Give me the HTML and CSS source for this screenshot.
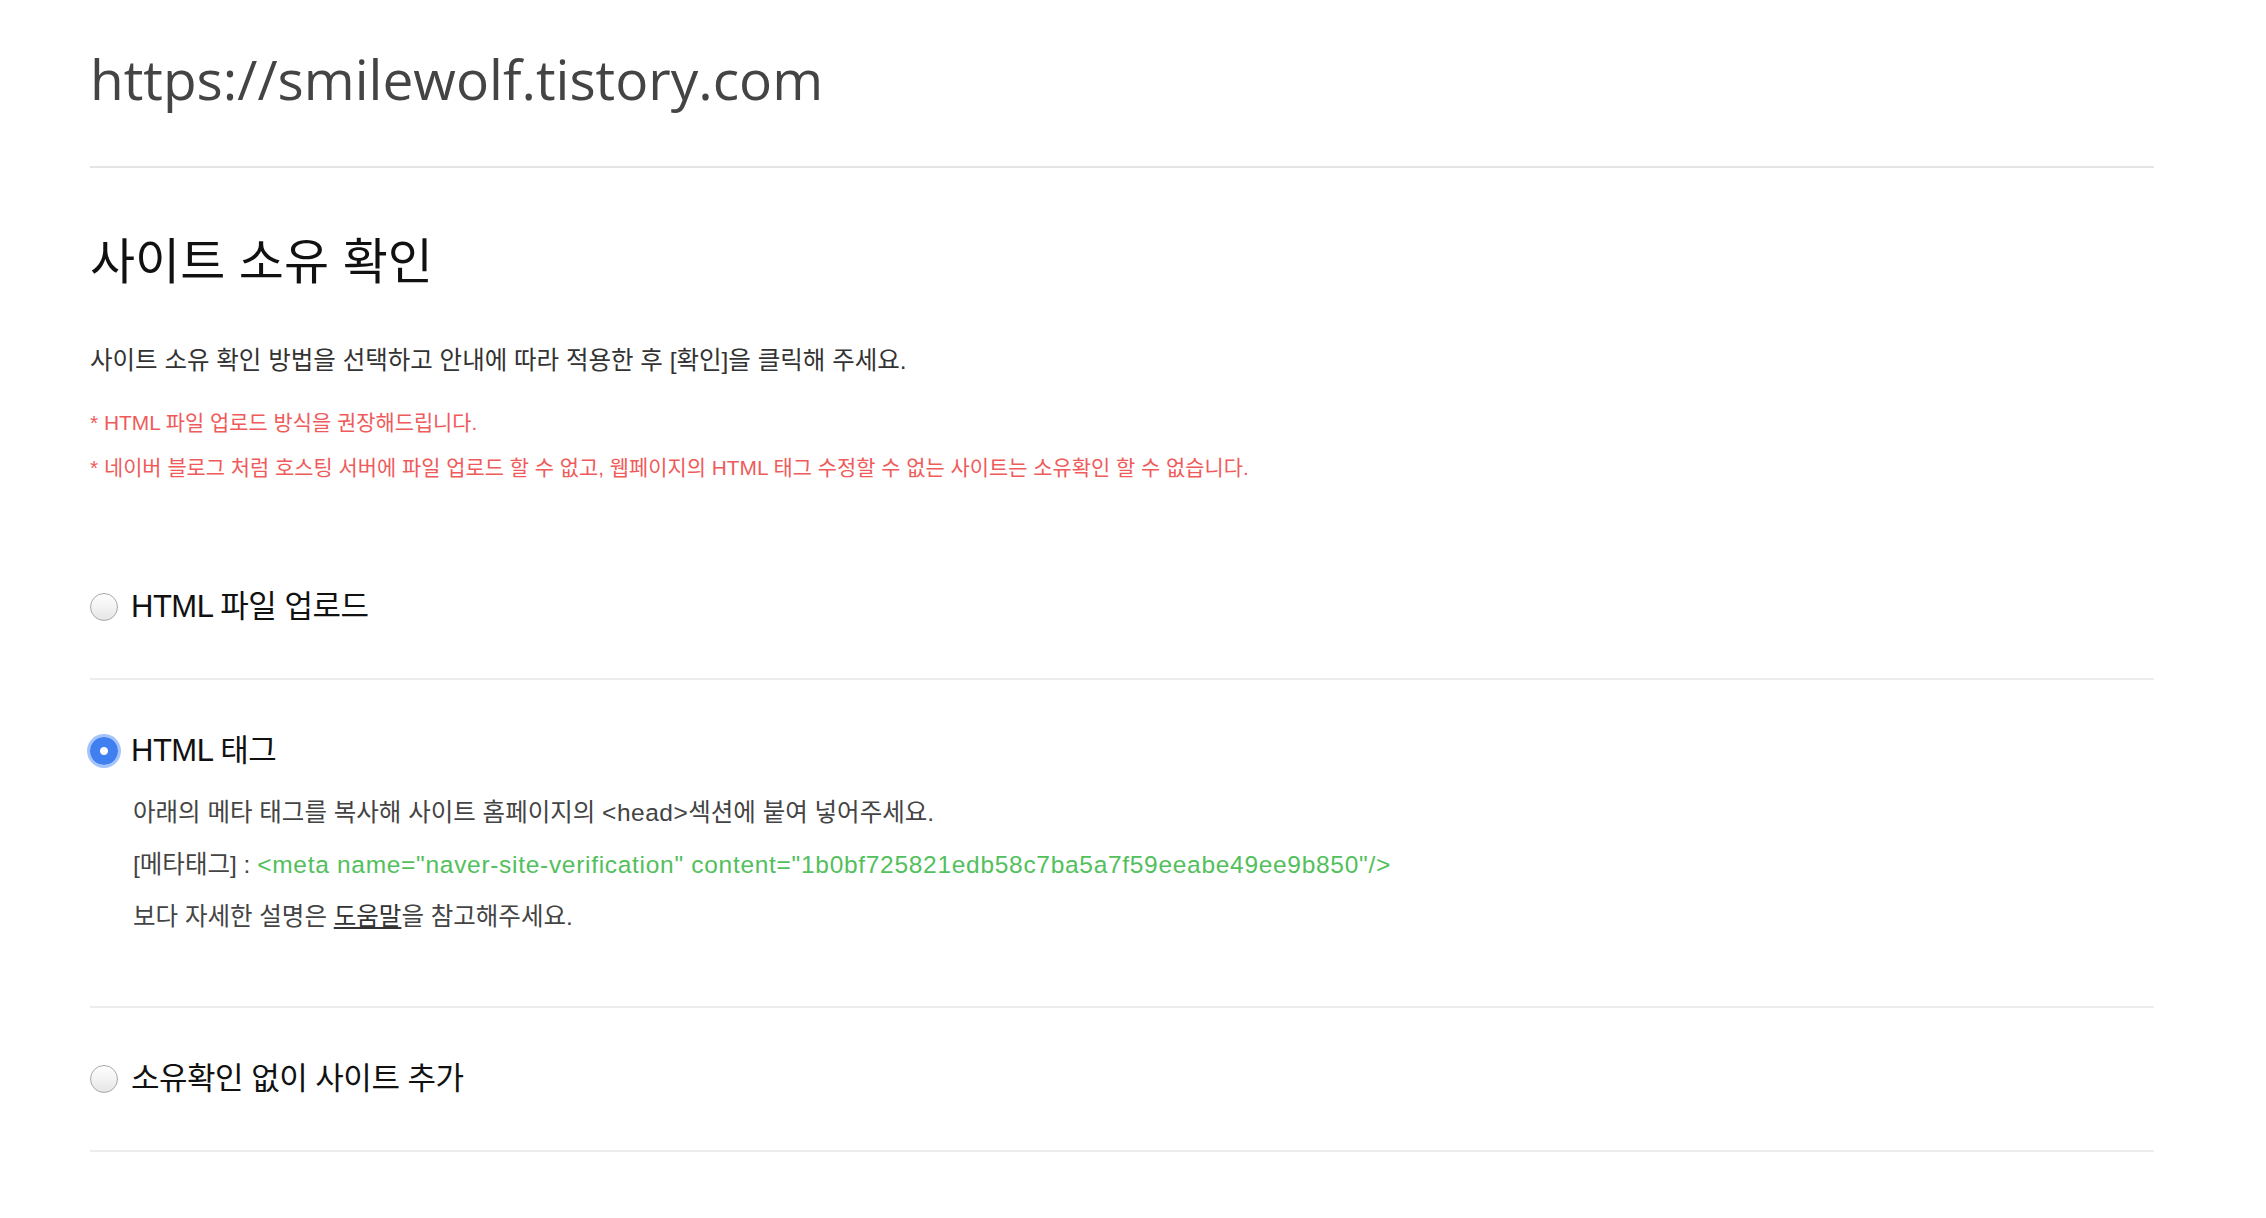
FILE: index.html
```html
<!DOCTYPE html>
<html lang="ko">
<head>
  <meta charset="UTF-8" />
  <meta name="viewport" content="width=device-width, initial-scale=1" />
  <title>사이트 소유 확인</title>
  <link rel="stylesheet" href="styles.css">
</head>
<body>
  <div class="page">
    <h1 class="site-url">https://smilewolf.tistory.com</h1>

    <h2 class="section-title">사이트 소유 확인</h2>
    <p class="desc">사이트 소유 확인 방법을 선택하고 안내에 따라 적용한 후 [확인]을 클릭해 주세요.</p>
    <p class="note">* HTML 파일 업로드 방식을 권장해드립니다.</p>
    <p class="note">* 네이버 블로그 처럼 호스팅 서버에 파일 업로드 할 수 없고, 웹페이지의 HTML 태그 수정할 수 없는 사이트는 소유확인 할 수 없습니다.</p>

    <div class="options">
      <div class="option">
        <label class="option-label">
          <input type="radio" name="verify" value="file" />
          <span>HTML 파일 업로드</span>
        </label>
      </div>

      <div class="option option-open">
        <label class="option-label">
          <input type="radio" name="verify" value="tag" checked />
          <span>HTML 태그</span>
        </label>
        <div class="option-body">
          <p>아래의 메타 태그를 복사해 사이트 홈페이지의 <span class="latin">&lt;head&gt;</span>섹션에 붙여 넣어주세요.</p>
          <p>[메타태그] : <span class="meta-code">&lt;meta name="naver-site-verification" content="1b0bf725821edb58c7ba5a7f59eeabe49ee9b850"/&gt;</span></p>
          <p>보다 자세한 설명은 <a href="#" class="help-link">도움말</a>을 참고해주세요.</p>
        </div>
      </div>

      <div class="option">
        <label class="option-label">
          <input type="radio" name="verify" value="none" />
          <span>소유확인 없이 사이트 추가</span>
        </label>
      </div>
    </div>
  </div>
</body>
</html>
```

FILE: styles.css
```css
body {
  margin: 0;
  padding: 0;
  background-color: #fff;
  color: #111;
  font-family: 'Liberation Sans', 'Noto Sans CJK KR', sans-serif;
}

.page {
  width: 2064px;
  margin-left: 90px;
}

.site-url {
  margin: 0;
  padding: 49px 0 57px;
  font-family: 'Open Sans', sans-serif;
  font-size: 55px;
  font-weight: normal;
  line-height: 60px;
  color: #444;
  border-bottom: 2px solid #e4e4e4;
}

.section-title {
  margin: 66px 0 0;
  font-size: 49px;
  font-weight: normal;
  line-height: 56px;
  color: #111;
}

.desc {
  margin: 54px 0 0;
  font-size: 24.5px;
  line-height: 34px;
  color: #333;
}

.note {
  margin: 30px 0 0;
  font-size: 20.9px;
  line-height: 30px;
  color: #ef5b5b;
}

.note + .note {
  margin-top: 15px;
}

.options {
  margin-top: 53px;
}

.option {
  padding: 51px 0;
  border-bottom: 2px solid #ececec;
}

.option-open {
  padding-bottom: 63px;
}

.option-label {
  display: flex;
  align-items: center;
  gap: 13px;
  font-size: 31px;
  line-height: 40px;
  letter-spacing: -0.5px;
  color: #111;
  cursor: pointer;
}

.option-label input {
  appearance: none;
  -webkit-appearance: none;
  margin: 0;
  width: 28px;
  height: 28px;
  border-radius: 50%;
  border: 1px solid #a8a8a8;
  background: linear-gradient(#fff, #e6e6e6);
  box-sizing: border-box;
  flex: none;
}

.option-label input:checked {
  border: none;
  background: radial-gradient(circle, #fff 0 3.5px, #3f7ff0 4.5px);
  box-shadow: 0 0 0 3px rgba(90, 145, 245, 0.55);
}

.option-body {
  margin-top: 16px;
  padding-left: 43px;
}

.option-body p {
  margin: 0;
  font-size: 24.5px;
  line-height: 52px;
  color: #444;
}

.latin {
  letter-spacing: 0.5px;
}

.meta-code {
  color: #52c05c;
  letter-spacing: 0.7px;
}

.help-link {
  color: #333;
  text-decoration: underline;
}
```
